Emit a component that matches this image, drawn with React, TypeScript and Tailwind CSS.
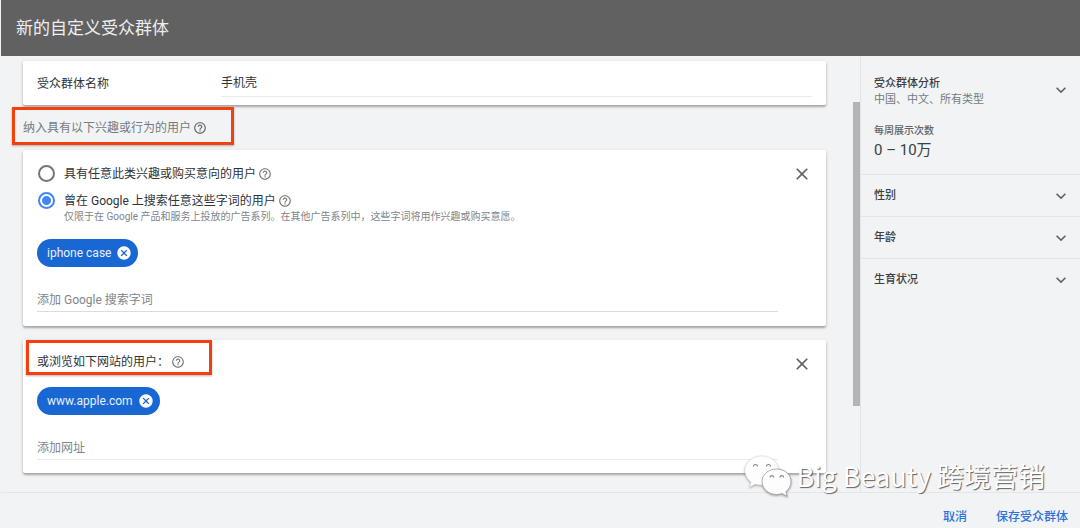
import React, { useState } from 'react';
import { MdCancel, MdClose, MdExpandMore, MdHelpOutline } from 'react-icons/md';

interface ChipProps {
  label: string;
}

const Chip: React.FC<ChipProps> = ({ label }) => (
  <span className="inline-flex h-7 items-center gap-[5px] rounded-full bg-[#1967d2] pr-1.5 pl-2.5 text-[12px] text-[#e8f0fe]">
    {label}
    <button type="button" aria-label={`移除 ${label}`} className="text-white">
      <MdCancel size={16} />
    </button>
  </span>
);

interface RadioProps {
  id: string;
  label: string;
  checked: boolean;
  onChange: () => void;
}

const RadioOption: React.FC<RadioProps> = ({ id, label, checked, onChange }) => (
  <div className="flex h-[27px] items-center">
    <input
      type="radio"
      id={id}
      name="intent"
      checked={checked}
      onChange={onChange}
      className="ml-px size-[17px] shrink-0 appearance-none rounded-full border-2 border-[#757575] bg-white checked:border-[#4285f4] checked:bg-[radial-gradient(circle,#4285f4_4px,transparent_5px)]"
    />
    <label htmlFor={id} className="ml-[9px] text-[#303336]">
      {label}
    </label>
    <MdHelpOutline size={14} className="ml-0.5 text-[#757575]" />
  </div>
);

const CloseButton: React.FC = () => (
  <button type="button" aria-label="关闭" className="text-[#5f6368]">
    <MdClose size={20} />
  </button>
);

const card = 'ml-[11px] rounded-xs bg-white shadow-[0_2px_2px_rgba(0,0,0,0.25),0_1px_4px_rgba(0,0,0,0.12)]';
const field =
  'block w-full border-b bg-transparent text-[12px] leading-[18px] text-[#303336] outline-none placeholder:text-[#80868b]';

const sections = ['性别', '年龄', '生育状况'];

export default function App() {
  const [intent, setIntent] = useState('search');

  return (
    <div className="relative flex min-h-screen flex-col bg-[#f1f3f4] pl-px font-[Roboto,'Noto_Sans_CJK_SC',sans-serif] text-[12px] leading-[18px] text-[#3c4043]">
      <header className="flex h-14 items-center bg-[#616161] px-[15px]">
        <h1 className="text-[17px] text-[#eeeeee]">新的自定义受众群体</h1>
      </header>

      <div className="flex flex-1">
        <main className="min-w-0 flex-1 pt-[5px] pr-[27px] pb-[19px] pl-[11px]">
          {/* Audience name */}
          <section className={`${card} flex h-[44px] pr-3.5 pl-3.5`}>
            <label htmlFor="audience-name" className="w-[184px] shrink-0 pt-3.5 text-[#303336]">
              受众群体名称
            </label>
            <input
              id="audience-name"
              defaultValue="手机壳"
              className={`${field} mt-3 mb-2 border-[#e8eaed] pb-1`}
            />
          </section>

          <div className="mt-0.5 flex h-[38px] w-[222px] items-center border-3 border-[#f4400f] pt-1 pl-2 text-[#757b80] shadow-[0_1px_2px_rgba(0,0,0,0.3)]">
            <span>纳入具有以下兴趣或行为的用户</span>
            <MdHelpOutline size={14} className="ml-0.5 text-[#5f6368]" />
          </div>

          {/* Interests and search terms */}
          <section className={`${card} mt-[5px] flex h-[176px] justify-between pt-2.5 pr-3.5 pl-3.5`}>
            <div className="min-w-0 flex-1">
              <RadioOption
                id="interest"
                label="具有任意此类兴趣或购买意向的用户"
                checked={intent === 'interest'}
                onChange={() => setIntent('interest')}
              />
              <RadioOption
                id="search"
                label="曾在 Google 上搜索任意这些字词的用户"
                checked={intent === 'search'}
                onChange={() => setIntent('search')}
              />
              <p className="-mt-1.5 ml-[27px] text-[10px] text-[#80868b]">
                仅限于在 Google 产品和服务上投放的广告系列。在其他广告系列中，这些字词将用作兴趣或购买意愿。
              </p>
              <div className="mt-[13px] flex">
                <Chip label="iphone case" />
              </div>
              <input
                aria-label="添加 Google 搜索字词"
                placeholder="添加 Google 搜索字词"
                className={`${field} mt-6 border-[#dadce0] pb-0.5`}
              />
            </div>
            <div className="ml-[14px] pt-1">
              <CloseButton />
            </div>
          </section>

          {/* Websites */}
          <section className={`${card} mt-3.5 flex h-[133px] justify-between pr-3.5 pl-[3px]`}>
            <div className="min-w-0 flex-1">
              <div className="flex h-[35px] w-[186px] items-center border-3 border-[#f4400f] pt-2 pl-2 shadow-[0_1px_2px_rgba(0,0,0,0.3)]">
                <span className="text-[#303336]">或浏览如下网站的用户：</span>
                <MdHelpOutline size={14} className="ml-0.5 text-[#757575]" />
              </div>
              <div className="mt-3 ml-[11px] flex">
                <Chip label="www.apple.com" />
              </div>
              <div className="mt-6 ml-[11px]">
                <input
                  aria-label="添加网址"
                  placeholder="添加网址"
                  className={`${field} border-[#e8eaed] pb-0.5`}
                />
              </div>
            </div>
            <div className="ml-[14px] pt-3.5">
              <CloseButton />
            </div>
          </section>
        </main>

        {/* Scroll bar */}
        <div className="w-[7px] pt-[46px]">
          <div className="h-[304px] bg-[#b2b4b6]" />
        </div>

        <aside className="w-[220px] shrink-0 border-l border-[#e3e5e8]">
          <div className="h-[118px] pt-5 pl-[13px]">
            <div className="flex items-start justify-between pr-[9px]">
              <div className="text-[11px] leading-4">
                <h2 className="font-medium">受众群体分析</h2>
                <p className="text-[#757b80]">中国、中文、所有类型</p>
              </div>
              <button type="button" aria-label="展开受众群体分析" className="pt-1 text-[#5f6368]">
                <MdExpandMore size={20} />
              </button>
            </div>
            <p className="mt-3.5 text-[10px] leading-[18px] font-medium text-[#5f6368]">每周展示次数</p>
            <p className="text-[15px] leading-5">0 – 10万</p>
          </div>
          {sections.map((name) => (
            <button
              key={name}
              type="button"
              className="flex h-[42px] w-full items-center justify-between border-t border-[#e3e5e8] pr-[9px] pl-[13px] text-[11px] font-medium"
            >
              {name}
              <MdExpandMore size={20} className="text-[#5f6368]" />
            </button>
          ))}
        </aside>
      </div>

      <footer className="flex h-9 items-end justify-end gap-[29px] border-t border-[#e3e5e8] pr-3 pb-0.5 text-[#2b74dc]">
        <button type="button" className="font-medium">
          取消
        </button>
        <button type="button" className="font-medium">
          保存受众群体
        </button>
      </footer>

      {/* Watermark */}
      <div className="pointer-events-none absolute right-[35px] bottom-[31px] flex items-center gap-1 text-white">
        <svg
          viewBox="0 0 48 42"
          className="h-[42px] w-12 drop-shadow-[0_1px_1px_rgba(0,0,0,0.35)]"
          aria-hidden="true"
        >
          <path
            d="M17.500 1C8 1 1 7.500 1 15.500c0 4.700 2.500 8.800 6.200 11.500L5.500 32l6-3c2 .6 4 .9 6 .9 9.500 0 17-6.400 17-14.400S27 1 17.500 1z"
            fill="#fdfdfd"
            stroke="#ddd"
            strokeWidth=".5"
          />
          <path
            d="M32.500 14C24.500 14 18 19.500 18 26.500S24.500 39.500 32.500 39.500c1.900 0 3.700-.3 5.300-.9l5.500 2.700-1.500-4.600c3.200-2.300 5.200-6 5.200-10.200C47 19.500 40.500 14 32.500 14z"
            fill="#fdfdfd"
            stroke="#999"
            strokeWidth=".8"
          />
          <path
            d="M9.500 11.500a2 2 0 0 1 4 0M22.500 11.500a2 2 0 0 1 4 0M26 22.500a1.800 1.800 0 0 1 3.600 0M36 22.500a1.800 1.800 0 0 1 3.600 0"
            fill="none"
            stroke="#888"
            strokeWidth="1.200"
          />
        </svg>
        <span className="font-['Noto_Sans_CJK_SC',sans-serif] text-[27px] leading-8 whitespace-nowrap [text-shadow:1px_1px_1px_rgba(0,0,0,0.6)]">
          Big Beauty 跨境营销
        </span>
      </div>
    </div>
  );
}
